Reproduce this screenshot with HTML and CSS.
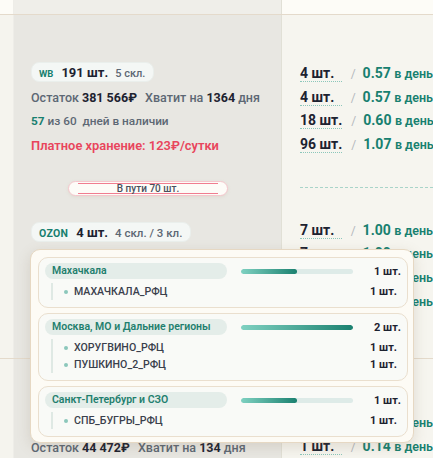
FILE: index.html
```html
<!DOCTYPE html>
<html lang="ru">
<head>
    <meta charset="UTF-8">
    <meta name="viewport" content="width=device-width, initial-scale=1.0">
    <title>Остатки</title>
    <link rel="stylesheet" href="styles.css">
</head>
<body>
    <div class="table">
        <div class="row head">
            <div class="cell side"></div>
            <div class="cell main"></div>
            <div class="cell stats"></div>
        </div>

        <div class="row">
            <div class="cell side"></div>
            <div class="cell main first">
                <div class="mp-badge">
                    <span class="mp wb">WB</span>
                    <span class="qty">191 шт.</span>
                    <span class="muted">5 скл.</span>
                </div>
                <div class="line">Остаток <b>381 566₽</b> <span class="gap"></span>Хватит на <b>1364</b> дня</div>
                <div class="line small"><span class="teal">57</span> из 60 &nbsp;дней в наличии</div>
                <div class="line red">Платное хранение: 123₽/сутки</div>

                <div class="transit"><span>В пути 70 шт.</span></div>

                <div class="mp-badge">
                    <span class="mp ozon">OZON</span>
                    <span class="qty">4 шт.</span>
                    <span class="muted big">4 скл. / 3 кл.</span>
                </div>
                <div class="line">Остаток <b>2 120₽</b> <span class="gap"></span>Хватит на <b>4</b> дня</div>

                <div class="popover">
                    <div class="region">
                        <div class="region-head">
                            <span class="region-name">Махачкала</span>
                            <span class="bar"><span class="fill" style="width: 50%"></span></span>
                            <span class="region-qty">1 шт.</span>
                        </div>
                        <ul class="stores">
                            <li><span class="dot"></span>МАХАЧКАЛА_РФЦ<b>1 шт.</b></li>
                        </ul>
                    </div>
                    <div class="region">
                        <div class="region-head">
                            <span class="region-name">Москва, МО и Дальние регионы</span>
                            <span class="bar"><span class="fill" style="width: 100%"></span></span>
                            <span class="region-qty">2 шт.</span>
                        </div>
                        <ul class="stores">
                            <li><span class="dot"></span>ХОРУГВИНО_РФЦ<b>1 шт.</b></li>
                            <li><span class="dot"></span>ПУШКИНО_2_РФЦ<b>1 шт.</b></li>
                        </ul>
                    </div>
                    <div class="region">
                        <div class="region-head">
                            <span class="region-name">Санкт-Петербург и СЗО</span>
                            <span class="bar"><span class="fill" style="width: 50%"></span></span>
                            <span class="region-qty">1 шт.</span>
                        </div>
                        <ul class="stores">
                            <li><span class="dot"></span>СПБ_БУГРЫ_РФЦ<b>1 шт.</b></li>
                        </ul>
                    </div>
                </div>
            </div>
            <div class="cell stats first">
                <div class="sale"><span class="count">4 шт.</span><span class="slash">/</span><span class="rate">0.57 <small>в день</small></span></div>
                <div class="sale"><span class="count">4 шт.</span><span class="slash">/</span><span class="rate">0.57 <small>в день</small></span></div>
                <div class="sale"><span class="count">18 шт.</span><span class="slash">/</span><span class="rate">0.60 <small>в день</small></span></div>
                <div class="sale"><span class="count">96 шт.</span><span class="slash">/</span><span class="rate">1.07 <small>в день</small></span></div>
                <div class="split"></div>
                <div class="sale"><span class="count">7 шт.</span><span class="slash">/</span><span class="rate">1.00 <small>в день</small></span></div>
                <div class="sale"><span class="count">7 шт.</span><span class="slash">/</span><span class="rate">1.00 <small>в день</small></span></div>
                <div class="sale"><span class="count">7 шт.</span><span class="slash">/</span><span class="rate">1.00 <small>в день</small></span></div>
                <div class="sale"><span class="count">7 шт.</span><span class="slash">/</span><span class="rate">1.00 <small>в день</small></span></div>
            </div>
        </div>

        <div class="row">
            <div class="cell side"></div>
            <div class="cell main second">
                <div class="line">Остаток <b>44 472₽</b> <span class="gap"></span>Хватит на <b>134</b> дня</div>
            </div>
            <div class="cell stats second">
                <div class="sale"><span class="count">1 шт.</span><span class="slash">/</span><span class="rate">0.14 <small>в день</small></span></div>
                <div class="sale"><span class="count">1 шт.</span><span class="slash">/</span><span class="rate">0.14 <small>в день</small></span></div>
            </div>
        </div>
    </div>
</body>
</html>
```

FILE: styles.css
```css
* {
    box-sizing: border-box;
}

body {
    margin: 0;
    background-color: #f6f5ef;
    font-family: 'Roboto', 'Noto Sans', sans-serif;
    color: #1d2230;
    overflow: hidden;
}

.table {
    width: 433px;
}

.row {
    display: grid;
    grid-template-columns: 13px 269px 1fr;
    border-bottom: 1px solid #e4dacb;
}

.row.head {
    height: 15px;
}

.row.head .side,
.row.head .stats {
    background-color: #fdfcf7;
}

.row.head .main {
    background-color: #efeee9;
}

.cell.side {
    background-color: #f5f4ee;
}

.cell.main {
    position: relative;
    background-color: #e8e7e2;
    border-left: 1px solid #eeede8;
    border-right: 1px solid #e1e0d6;
    padding-left: 17px;
}

.cell.stats {
    background-color: #f6f5ef;
    padding-left: 18px;
    overflow: hidden;
    white-space: nowrap;
}

.main.first {
    height: 343px;
    padding-top: 47px;
}

.stats.first {
    padding-top: 50px;
}

.main.second {
    padding-top: 73px;
    height: 100px;
}

.stats.second {
    padding-top: 55px;
}

/* marketplace badge */
.mp-badge {
    display: inline-flex;
    align-items: baseline;
    height: 20px;
    padding: 0 8px 0 7px;
    line-height: 19px;
    background-color: #f4f7f5;
    border: 1px solid #eaefec;
    border-radius: 8px;
    white-space: nowrap;
}

.mp {
    font-weight: 700;
    color: #17806f;
    margin-right: 8px;
}

.mp.wb {
    font-size: 9.5px;
}

.mp.ozon {
    font-size: 10.5px;
    letter-spacing: 0.3px;
}

.qty {
    font-size: 13px;
    font-weight: 700;
    margin-right: 7px;
}

.muted {
    font-size: 11px;
    font-weight: 500;
    color: #5d6874;
}

.muted.big {
    font-size: 11.5px;
}

.line {
    margin-top: 7px;
    font-size: 12.5px;
    line-height: 17px;
    font-weight: 500;
    color: #5d6874;
    white-space: nowrap;
}

.line b {
    color: #1d2230;
    font-weight: 700;
}

.line .gap {
    display: inline-block;
    width: 5px;
}

.line.small {
    font-size: 11.8px;
}

.teal {
    color: #17806f;
    font-weight: 700;
}

.line.red {
    font-size: 12.9px;
    color: #e8455c;
    font-weight: 600;
}

/* goods in transit */
.transit {
    width: 160px;
    height: 15px;
    margin: 27px 0 26px 37px;
    padding: 1px 9px;
    background-color: #fdfcf8;
    border: 1px solid #f5c7cd;
    border-radius: 8px;
    box-shadow: 0 1px 3px rgba(200, 180, 160, 0.25);
}

.transit span {
    display: block;
    height: 11px;
    border-top: 1px solid #f07d90;
    border-bottom: 1px solid #f07d90;
    font-size: 10px;
    line-height: 9px;
    font-weight: 500;
    color: #4a505c;
    text-align: center;
}

/* sales per day */
.sale {
    display: flex;
    align-items: baseline;
    height: 23.7px;
}

.count {
    display: inline-block;
    width: 48px;
    font-size: 14px;
    font-weight: 700;
    line-height: 16px;
    border-bottom: 1px dotted #8cc7bb;
}

.slash {
    margin: 0 7px 0 9px;
    font-size: 12px;
    color: #b4b8bd;
}

.rate {
    font-size: 14px;
    font-weight: 700;
    color: #17806f;
}

.rate small {
    font-size: 12.5px;
    font-weight: 600;
}

.split {
    height: 1px;
    margin: 27px 0 34px;
    border-top: 1px dashed #a9d4c9;
}

/* warehouses popover */
.popover {
    position: absolute;
    left: 16px;
    top: 234px;
    z-index: 2;
    width: 384px;
    display: flex;
    flex-direction: column;
    gap: 5px;
    padding: 7px 5px 5px 7px;
    background-color: #fdfbf5;
    border: 1px solid #e6d8c3;
    border-radius: 10px;
    box-shadow: 0 4px 14px rgba(120, 100, 70, 0.18);
}

.region {
    padding: 5px 6px 7px 6px;
    background-color: #f9faf7;
    border: 1px solid #eadfce;
    border-radius: 10px;
}

.region-head {
    display: flex;
    align-items: center;
    height: 16px;
}

.region-name {
    width: 182px;
    height: 16px;
    padding-left: 7px;
    line-height: 16px;
    font-size: 10.5px;
    font-weight: 600;
    color: #1f7f6e;
    background-color: #e4ede9;
    border-radius: 8px;
    white-space: nowrap;
}

.bar {
    width: 112px;
    height: 5px;
    margin-left: 14px;
    background-color: #deebe8;
    border-radius: 3px;
    overflow: hidden;
}

.fill {
    display: block;
    height: 100%;
    border-radius: 3px;
    background: linear-gradient(90deg, #7fd1c1, #1b8170);
}

.region-qty {
    margin-left: auto;
    font-size: 11px;
    font-weight: 700;
}

.stores {
    list-style: none;
    margin: 4px 4px 0 6px;
    padding: 0 0 0 11px;
    border-left: 2px solid #dfe9e4;
}

.stores li {
    display: flex;
    align-items: center;
    height: 17px;
    font-size: 10.6px;
    font-weight: 500;
    color: #3a404c;
}

.stores .dot {
    width: 4px;
    height: 4px;
    margin-right: 6px;
    border-radius: 50%;
    background-color: #8cc7bb;
}

.stores b {
    margin-left: auto;
    font-size: 11px;
    font-weight: 700;
    color: #1d2230;
}
```
